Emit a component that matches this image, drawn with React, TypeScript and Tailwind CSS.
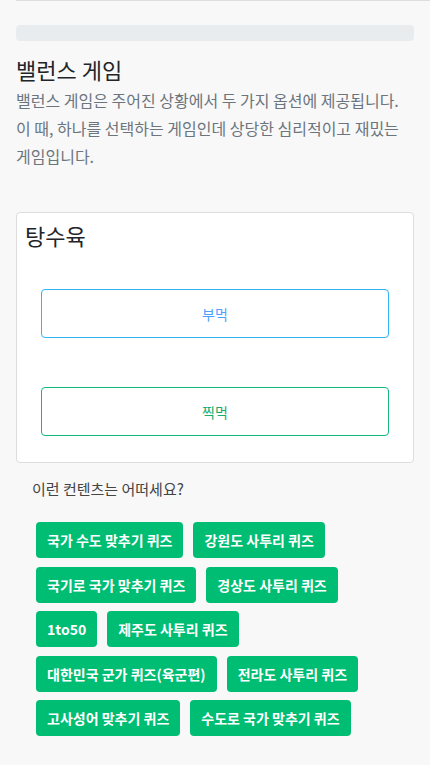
const related = [
  "국가 수도 맞추기 퀴즈",
  "강원도 사투리 퀴즈",
  "국기로 국가 맞추기 퀴즈",
  "경상도 사투리 퀴즈",
  "1to50",
  "제주도 사투리 퀴즈",
  "대한민국 군가 퀴즈(육군편)",
  "전라도 사투리 퀴즈",
  "고사성어 맞추기 퀴즈",
  "수도로 국가 맞추기 퀴즈",
];

export default function App() {
  return (
    <div className="min-h-screen bg-[#f8f8f8] font-['Noto_Sans_CJK_KR',sans-serif] text-[#212529]">
      <div className="ml-4 border-t border-[#dedede]" />

      <div className="px-4">
        {/* placeholder bar */}
        <div className="mt-6 h-4 rounded bg-[#e9ecef]" />

        {/* intro */}
        <h1 className="mt-3 text-[22px] leading-[33px] font-normal">밸런스 게임</h1>
        <p className="text-base leading-[28px] text-[#6c757d]">
          밸런스 게임은 주어진 상황에서 두 가지 옵션에 제공됩니다. 이 때, 하나를 선택하는 게임인데 상당한 심리적이고 재밌는 게임입니다.
        </p>

        {/* question card */}
        <div className="mt-[42px] rounded border border-[#dddddd] bg-white">
          <h2 className="px-2 pt-1.5 text-[22px] leading-[33px]">탕수육</h2>
          <div className="flex flex-col gap-[49px] px-6 pt-[37px] pb-[26px]">
            <button className="h-[49px] rounded border border-[#2fb4f7] text-sm text-[#4f9ffd]">
              부먹
            </button>
            <button className="h-[49px] rounded border border-[#13b97a] text-sm text-[#1aab6d]">
              찍먹
            </button>
          </div>
        </div>

        {/* related */}
        <p className="mt-[16px] pl-4 text-[15px] leading-5 text-[#444]">이런 컨텐츠는 어떠세요?</p>
        <div className="mt-[23px] flex flex-wrap gap-x-[10px] gap-y-[8.5px] pl-5 pr-5 pb-8">
          {related.map((t) => (
            <span
              key={t}
              className="rounded bg-[#00bd74] px-[11px] py-2 text-sm leading-5 font-bold text-white"
            >
              {t}
            </span>
          ))}
        </div>
      </div>
    </div>
  );
}
